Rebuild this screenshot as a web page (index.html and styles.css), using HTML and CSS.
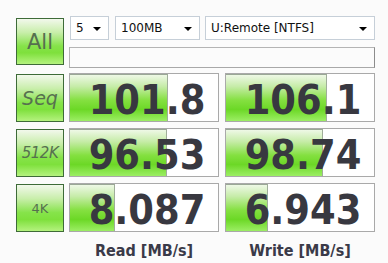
FILE: index.html
```html
<!DOCTYPE html>
<html lang="en">
<head>
    <meta charset="UTF-8">
    <title>CrystalDiskMark</title>
    <link rel="stylesheet" href="styles.css">
</head>
<body>
    <div class="window">
        <div class="top">
            <div class="btn all">All</div>
            <div class="controls">
                <div class="combos">
                    <div class="combo count">5<span class="arrow"></span></div>
                    <div class="combo size">100MB<span class="arrow"></span></div>
                    <div class="combo drive">U:Remote [NTFS]<span class="arrow"></span></div>
                </div>
                <div class="path"></div>
            </div>
        </div>

        <div class="rows">
            <div class="row">
                <div class="btn seq">Seq</div>
                <div class="cell"><div class="bar" style="width: 98px"></div><span class="num">101.8</span></div>
                <div class="cell"><div class="bar" style="width: 101px"></div><span class="num">106.1</span></div>
            </div>
            <div class="row">
                <div class="btn k512">512K</div>
                <div class="cell"><div class="bar" style="width: 97px"></div><span class="num">96.53</span></div>
                <div class="cell"><div class="bar" style="width: 97px"></div><span class="num">98.74</span></div>
            </div>
            <div class="row">
                <div class="btn k4">4K</div>
                <div class="cell"><div class="bar" style="width: 45px"></div><span class="num">8.087</span></div>
                <div class="cell"><div class="bar" style="width: 42px"></div><span class="num">6.943</span></div>
            </div>
        </div>

        <div class="labels">
            <div class="label">Read [MB/s]</div>
            <div class="label">Write [MB/s]</div>
        </div>
    </div>
</body>
</html>
```

FILE: styles.css
```css
* {
    margin: 0;
    padding: 0;
    box-sizing: border-box;
}

body {
    background: #fbfbfb;
    font-family: "DejaVu Sans", sans-serif;
    width: 388px;
    height: 263px;
    overflow: hidden;
}

.window {
    padding: 16px 0 0 16px;
}

.top {
    display: flex;
    gap: 5px;
}

.btn {
    width: 48px;
    height: 48px;
    border: 1px solid #3e6b38;
    background: linear-gradient(to bottom, #f2f8ec 0%, #c8eeaa 30%, #86e34a 60%, #7ee03c 75%, #b4f27e 100%);
    color: #56704f;
    display: flex;
    align-items: center;
    justify-content: center;
}

.all {
    height: 47px;
    margin-top: 2px;
    font-size: 21px;
}

.seq {
    font-style: italic;
    font-size: 19px;
}

.k512 {
    font-style: italic;
    font-size: 15px;
    letter-spacing: -0.5px;
}

.k4 {
    font-size: 13px;
}

.controls {
    width: 306px;
    display: flex;
    flex-direction: column;
    gap: 7px;
}

.combos {
    display: flex;
    height: 24px;
}

.combo {
    position: relative;
    height: 24px;
    background: #fff;
    border: 1px solid #c6cfd8;
    font-size: 12px;
    color: #111;
    padding: 4px 0 0 5px;
}

.count { width: 39px; margin-left: 1px; }
.size { width: 85px; margin-left: 6px; }
.drive { width: 170px; margin-left: 5px; }

.arrow {
    position: absolute;
    right: 7px;
    top: 10px;
    border-left: 4px solid transparent;
    border-right: 4px solid transparent;
    border-top: 4px solid #000;
}

.path {
    height: 21px;
    background: #fbfbfb;
    border: 1px solid #b4b4b4;
    border-right-color: #8c8c8c;
    border-bottom-color: #a8a8a8;
}

.rows {
    display: flex;
    flex-direction: column;
    gap: 6px;
    margin-top: 5px;
}

.row {
    display: flex;
    align-items: center;
    gap: 5px;
    height: 49px;
}

.row .btn {
    margin-top: 1px;
}

.row .cell + .cell {
    margin-left: 1px;
}

.cell {
    position: relative;
    width: 150px;
    height: 49px;
    background: #fff;
    border: 1px solid #a9a9a9;
    display: flex;
    align-items: center;
    justify-content: center;
}

.bar {
    position: absolute;
    left: 0;
    top: 0;
    bottom: 0;
    border-top: 1px solid #9aa896;
    border-right: 1px solid #a0ae9a;
    background: linear-gradient(to bottom, #eef8e6 0%, #c6eca8 25%, #84e040 55%, #6cd826 75%, #9cee64 100%);
}

.num {
    position: relative;
    font-family: "DejaVu Sans Condensed", "DejaVu Sans", sans-serif;
    font-weight: bold;
    font-size: 41px;
    color: #383840;
    padding-left: 6px;
    margin-top: 4px;
}

.labels {
    display: flex;
    padding-left: 53px;
    gap: 6px;
    margin-top: 9px;
}

.label {
    width: 150px;
    text-align: center;
    font-family: "DejaVu Sans Condensed", "DejaVu Sans", sans-serif;
    font-weight: bold;
    font-size: 16px;
    color: #3a3a48;
}
```
